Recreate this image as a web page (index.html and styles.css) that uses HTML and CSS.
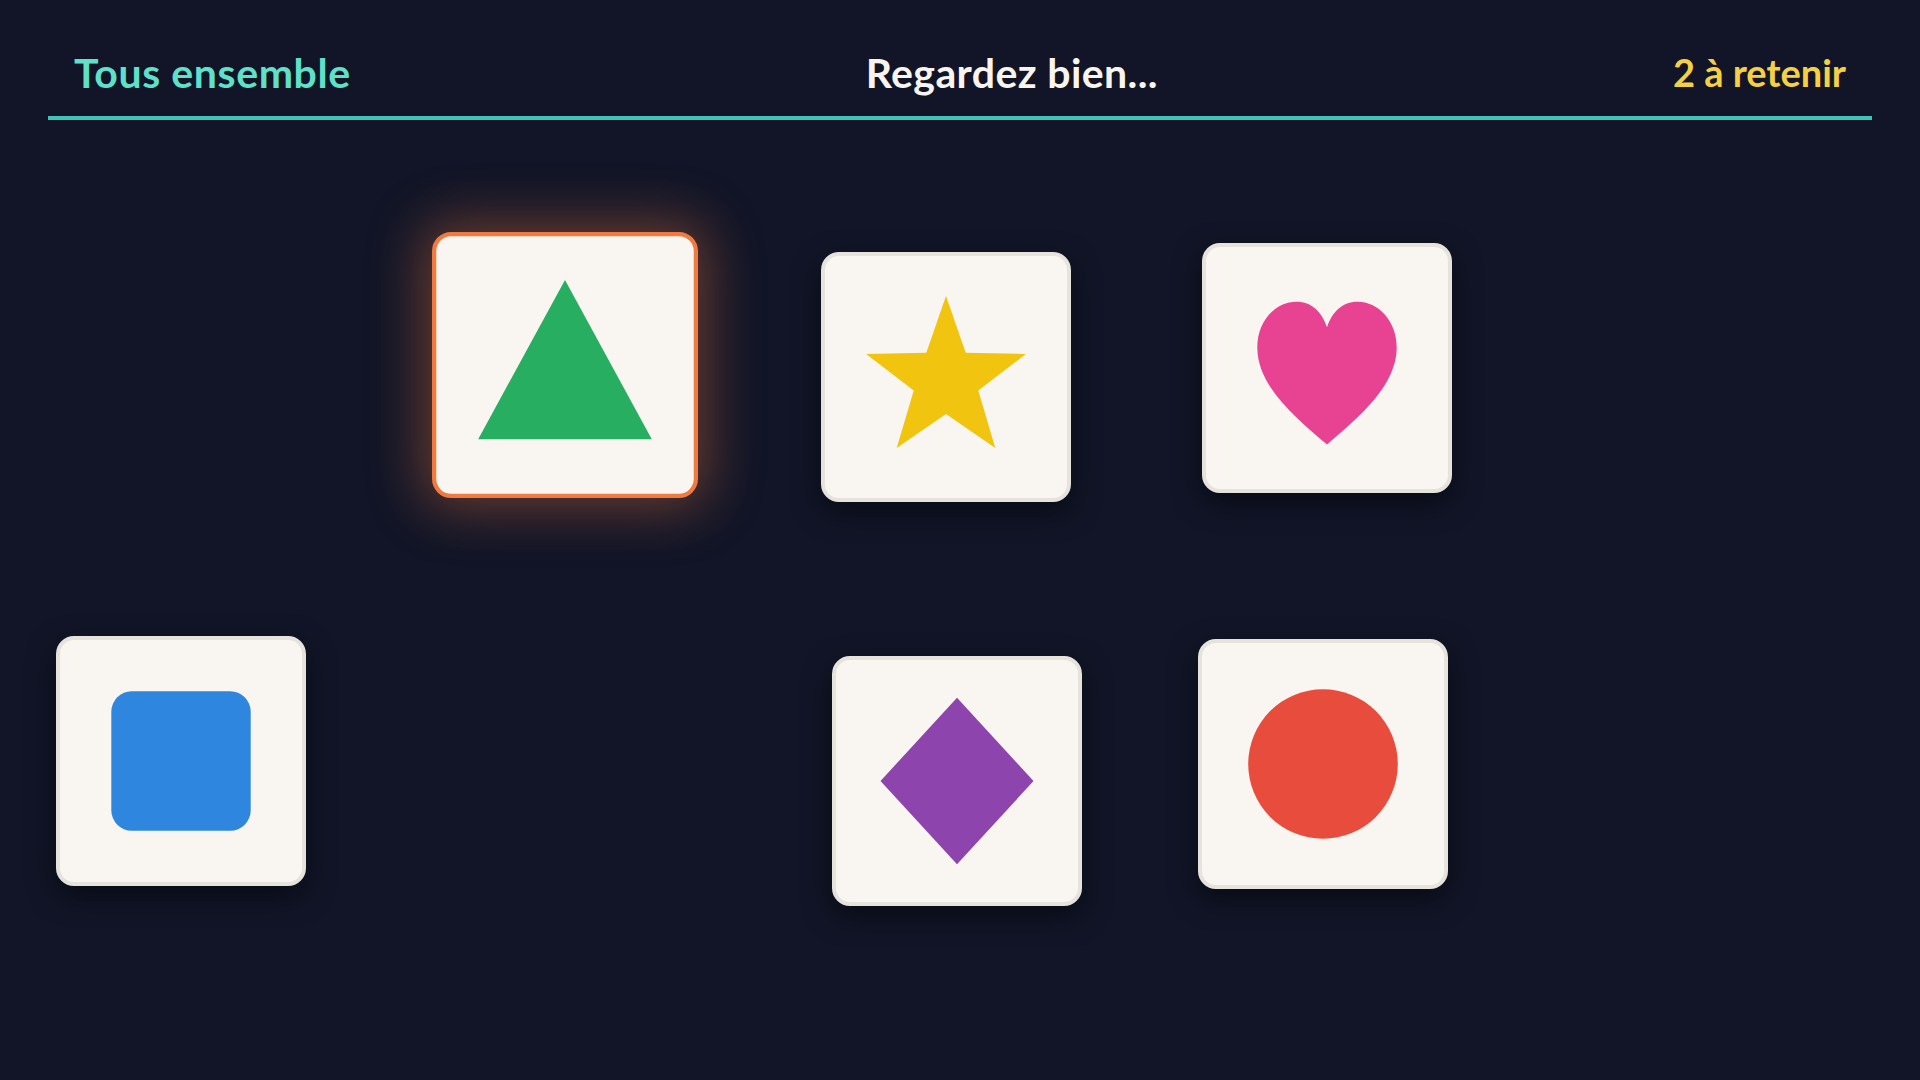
FILE: index.html
```html
<!DOCTYPE html>
<html lang="fr">
<head>
<meta charset="utf-8">
<title>Tous ensemble</title>
<link rel="stylesheet" href="styles.css">
</head>
<body>
<header class="topbar">
  <span class="mode">Tous ensemble</span>
  <span class="prompt">Regardez bien...</span>
  <span class="count">2 à retenir</span>
</header>
<main class="board">
  <div class="card selected" style="left:440px;top:120px">
    <svg class="shape" viewBox="0 0 100 100"><polygon points="50,3 98,91 2,91" fill="#27ae60"/></svg>
  </div>
  <div class="card" style="left:821px;top:132px">
    <svg class="shape" viewBox="0 0 100 100"><polygon points="50,2.4 61.6,35.7 97,36.5 69,58 79,91.8 50,71.8 21,91.8 31,58 3,36.5 38.4,35.7" fill="#f1c40f"/></svg>
  </div>
  <div class="card" style="left:1202px;top:123px">
    <svg class="shape" viewBox="0 0 100 100"><path d="M50 95 C30 78 9 60 9 38 C9 22 20 11 32 11 C41 11 47 17 50 26 C53 17 59 11 68 11 C80 11 91 22 91 38 C91 60 70 78 50 95 Z" fill="#e84393"/></svg>
  </div>
  <div class="card" style="left:56px;top:516px">
    <svg class="shape" viewBox="0 0 100 100"><rect x="9" y="9" width="82" height="82" rx="12" fill="#2e86de"/></svg>
  </div>
  <div class="card" style="left:832px;top:536px">
    <svg class="shape" viewBox="0 0 100 100"><polygon points="50,1 95,50 50,99 5,50" fill="#8e44ad"/></svg>
  </div>
  <div class="card" style="left:1198px;top:519px">
    <svg class="shape" viewBox="0 0 100 100"><circle cx="50" cy="50" r="44" fill="#e74c3c"/></svg>
  </div>
</main>
</body>
</html>
```
FILE: styles.css
```css
html, body {
  margin: 0;
  padding: 0;
  background: #111527;
  height: 100%;
  overflow: hidden;
}

body {
  font-family: "Lato", "Noto Sans", sans-serif;
}

.topbar {
  margin: 0 48px;
  padding: 49px 26px 20px;
  border-bottom: 4px solid #3cc5b0;
  display: flex;
  justify-content: space-between;
  align-items: center;
  font-weight: 700;
  font-size: 41px;
  line-height: 47px;
}

.mode {
  color: #5fe0c8;
  letter-spacing: 0.6px;
}

.prompt {
  color: #f8f5ee;
  letter-spacing: 0.4px;
}

.count {
  color: #f5d142;
  font-size: 38px;
}

.board {
  position: relative;
  height: 960px;
}

.card {
  position: absolute;
  width: 250px;
  height: 250px;
  box-sizing: border-box;
  background: #f9f6f1;
  border: 4px solid #e6e3dd;
  border-radius: 18px;
  box-shadow: 0 10px 28px rgba(0, 0, 0, 0.5);
  display: flex;
  align-items: center;
  justify-content: center;
}

.card.selected {
  border-color: #f07a40;
  transform: scale(1.064);
  box-shadow: 0 0 50px 10px rgba(240, 122, 64, 0.38);
}

.shape {
  width: 170px;
  height: 170px;
  display: block;
}
```
